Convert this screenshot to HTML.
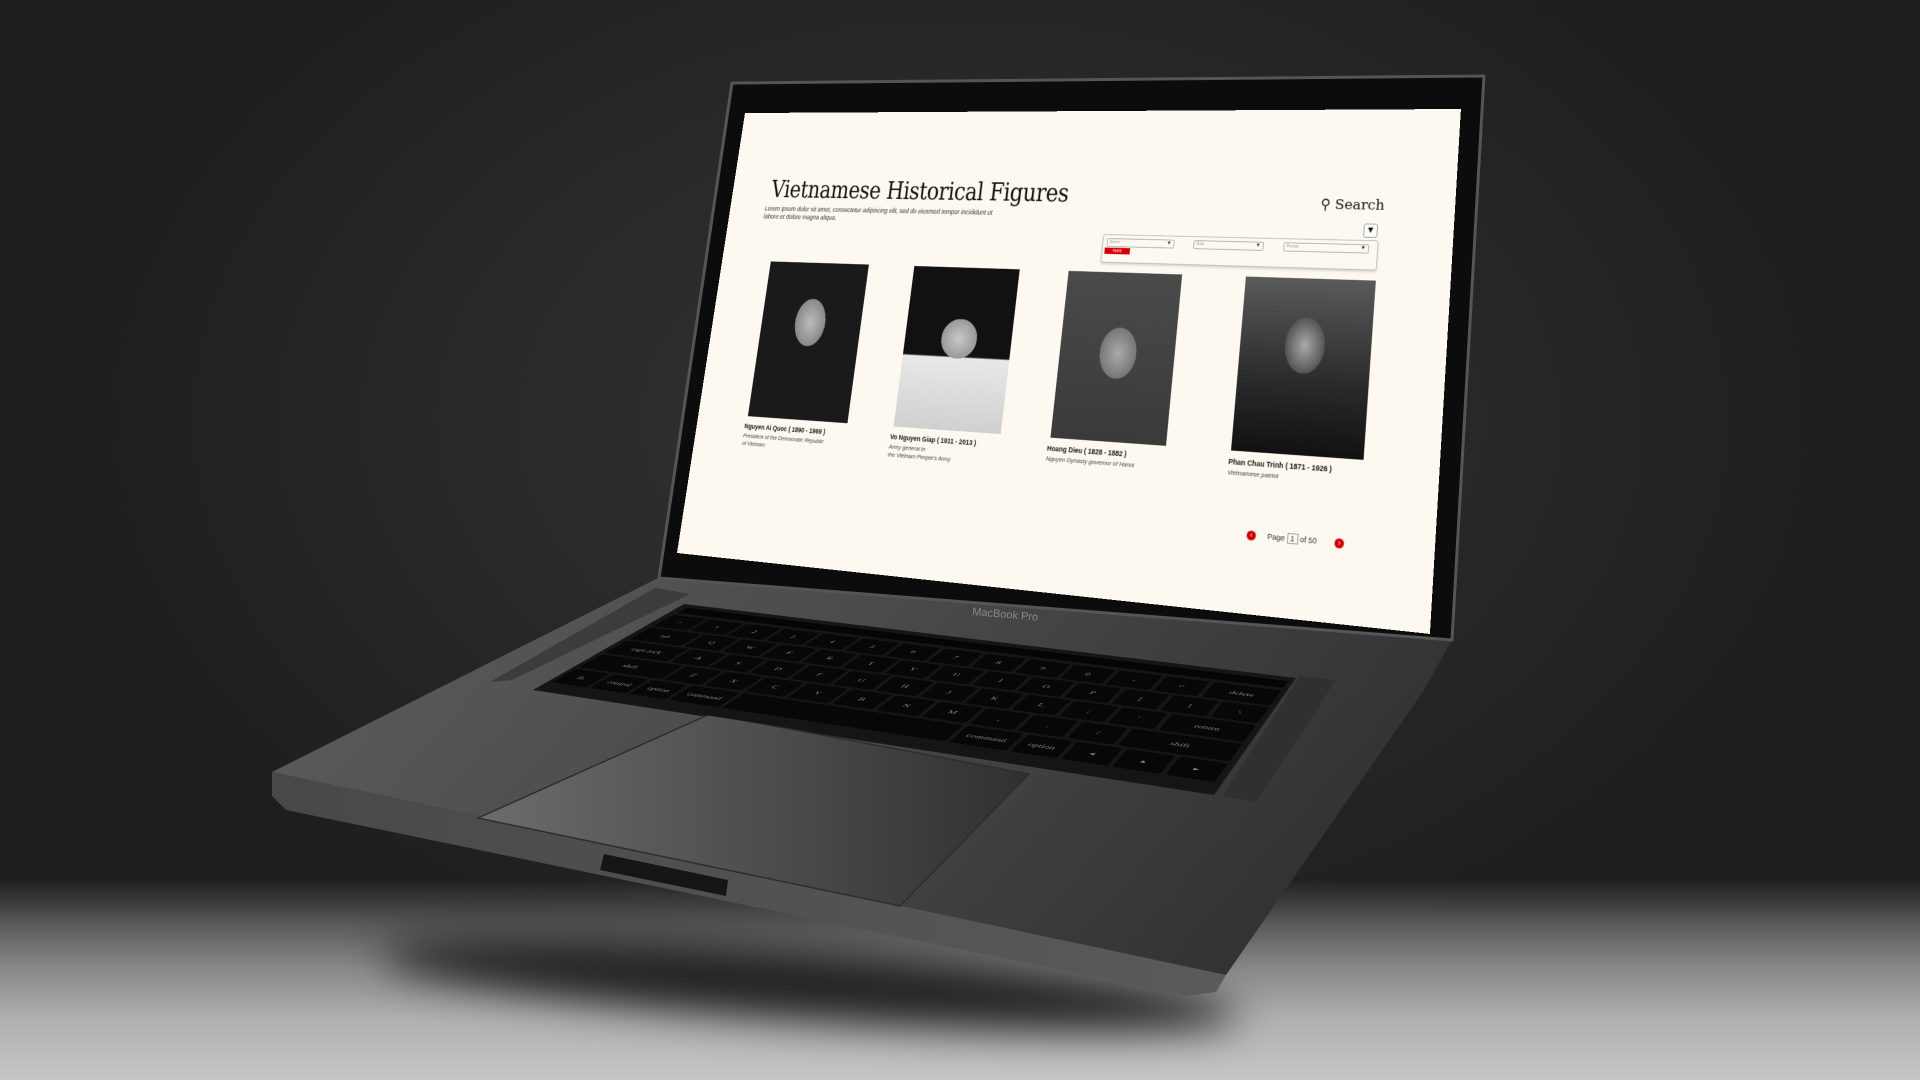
<!DOCTYPE html>
<html><head><meta charset="utf-8"><style>
html,body{margin:0;padding:0;width:1920px;height:1080px;overflow:hidden;background:#222;}
#bg{position:absolute;left:0;top:0;width:1920px;height:1080px;
background:radial-gradient(ellipse 900px 600px at 960px 420px,#353535 0%,#282828 55%,#1e1e1e 100%);}
#floor{position:absolute;left:0;top:880px;width:1920px;height:200px;
background:linear-gradient(to bottom,rgba(60,60,60,0) 0px,#5a5a5a 45px,#8a8a8a 90px,#b0b0b0 140px,#c6c6c6 200px);}
#shadow{position:absolute;left:380px;top:950px;width:860px;height:70px;border-radius:50%;
background:#151515;filter:blur(20px);transform:rotate(4deg);opacity:.9}
svg{position:absolute;left:0;top:0}
.q{position:absolute;left:0;top:0;transform-origin:0 0;}
#screen{width:1000px;height:600px;background:#fdf8f0;font-family:"Liberation Sans",sans-serif;color:#111;overflow:hidden}
#screen .title{position:absolute;left:62px;top:88px;font-family:"DejaVu Serif","Liberation Serif",serif;font-size:33px;letter-spacing:-0.5px;transform:scaleX(0.9);transform-origin:0 0;white-space:nowrap}
#screen .sub{position:absolute;left:56px;top:130px;font-size:8.5px;font-style:italic;color:#333;line-height:11px}
#screen .search{position:absolute;left:838px;top:108px;font-family:"DejaVu Serif",serif;font-size:17px;}
#screen .fico{position:absolute;left:893px;top:140px;width:15px;height:15px;border:1.5px solid #999;border-radius:3px;background:#fff;font-size:11px;text-align:center;line-height:15px;font-weight:bold}
#screen .panel{position:absolute;left:560px;top:160px;width:350px;height:34px;border:1.5px solid #bbb;border-radius:3px;background:#fdf8f0;box-shadow:0 2px 3px rgba(0,0,0,.15)}
.sel{position:absolute;top:4px;height:9px;border:1px solid #aaa;border-radius:2px;font-size:5px;color:#999;padding-left:3px;line-height:9px}
.sel b{position:absolute;right:3px;top:0;color:#111;font-size:6px}
.apply{position:absolute;left:3px;top:16px;width:34px;height:8px;background:#d40000;color:#fff;font-size:5px;line-height:8px;text-align:center}
.ph{position:absolute;top:208px;width:152px;height:208px;}
.cap{position:absolute;top:424px;font-size:8.5px;font-weight:bold;white-space:nowrap}
.desc{position:absolute;top:437px;font-size:7.5px;font-style:italic;color:#444;line-height:10px}
.pg{position:absolute;top:506px;font-size:9px;color:#333}
.dot{position:absolute;top:506px;width:11px;height:11px;border-radius:50%;background:#d40000;color:#fff;font-size:9px;line-height:11px;text-align:center}
#kb{width:640px;height:230px;background:#151515}
#kb .row{display:flex;gap:4px;margin:0 4px 4px 4px}
#kb .k{background:#070707;border-radius:3px;height:34px;flex:1;color:#888;font-size:9px;text-align:center;line-height:34px}
#kb .tb{height:16px;margin:4px 4px 6px;background:#050505;border-radius:3px;position:relative}
</style></head><body>
<div id="bg"></div><div id="floor"></div><div id="shadow"></div>
<svg width="1920" height="1080" viewBox="0 0 1920 1080">
<defs>
<linearGradient id="base" x1="0" y1="0" x2="1" y2="0.3"><stop offset="0" stop-color="#5e5e60"/><stop offset="0.5" stop-color="#4a4a4c"/><stop offset="1" stop-color="#333335"/></linearGradient>
<linearGradient id="tp" x1="0" y1="0" x2="1" y2="0"><stop offset="0" stop-color="#6c6c6e"/><stop offset="1" stop-color="#303032"/></linearGradient>
<linearGradient id="edge" x1="0" y1="0" x2="1" y2="0"><stop offset="0" stop-color="#48484a"/><stop offset="1" stop-color="#5a5a5c"/></linearGradient>
</defs>
<polygon points="272,772 1226,975 1216,992 1186,996 286,810 272,796" fill="url(#edge)"/>
<polygon points="662,576 1452,640 1424,690 1226,975 272,772" fill="url(#base)" stroke-linejoin="round"/>
<polygon points="690,594 512,680 490,682 655,588" fill="#3c3c3e"/>
<polygon points="1300,676 1336,680 1256,802 1222,796" fill="#303032"/>
<polygon points="684,604 1296,678 1214,795 533,690" fill="#161616"/>
<polygon points="710,714 1029,774 900,906 478,818" fill="url(#tp)" stroke="#2e2e30" stroke-width="1.5"/>
<polygon points="604,854 728,880 726,896 600,870" fill="#151515"/>
<polygon points="732,83 1484,76 1452,640 659,578" fill="#0c0c0c" stroke="#555" stroke-width="3" stroke-linejoin="round"/>
<text x="972" y="615" fill="#888" font-family="Liberation Sans" font-size="11" transform="rotate(5 972 615)">MacBook Pro</text>
</svg>
<div id="kb" class="q">
<div class="tb"></div>
<div class="row"><div class="k">~</div><div class="k">1</div><div class="k">2</div><div class="k">3</div><div class="k">4</div><div class="k">5</div><div class="k">6</div><div class="k">7</div><div class="k">8</div><div class="k">9</div><div class="k">0</div><div class="k">-</div><div class="k">=</div><div class="k" style="flex:1.5">delete</div></div>
<div class="row"><div class="k" style="flex:1.5">tab</div><div class="k">Q</div><div class="k">W</div><div class="k">E</div><div class="k">R</div><div class="k">T</div><div class="k">Y</div><div class="k">U</div><div class="k">I</div><div class="k">O</div><div class="k">P</div><div class="k">[</div><div class="k">]</div><div class="k">\</div></div>
<div class="row"><div class="k" style="flex:1.8">caps lock</div><div class="k">A</div><div class="k">S</div><div class="k">D</div><div class="k">F</div><div class="k">G</div><div class="k">H</div><div class="k">J</div><div class="k">K</div><div class="k">L</div><div class="k">;</div><div class="k">'</div><div class="k" style="flex:1.8">return</div></div>
<div class="row"><div class="k" style="flex:2.3">shift</div><div class="k">Z</div><div class="k">X</div><div class="k">C</div><div class="k">V</div><div class="k">B</div><div class="k">N</div><div class="k">M</div><div class="k">,</div><div class="k">.</div><div class="k">/</div><div class="k" style="flex:2.3">shift</div></div>
<div class="row"><div class="k">fn</div><div class="k">control</div><div class="k">option</div><div class="k" style="flex:1.3">command</div><div class="k" style="flex:5.5"></div><div class="k" style="flex:1.3">command</div><div class="k">option</div><div class="k">◂</div><div class="k">▴</div><div class="k">▸</div></div>
</div>
<div id="screen" class="q">
<div class="title">Vietnamese Historical Figures</div>
<div class="sub">Lorem ipsum dolor sit amet, consectetur adipiscing elit, sed do eiusmod tempor incididunt ut<br>labore et dolore magna aliqua.</div>
<div class="search">&#9906; Search</div>
<div class="fico">▼</div>
<div class="panel">
<div class="sel" style="left:5px;width:85px">Event<b>▼</b></div>
<div class="sel" style="left:120px;width:85px">Role<b>▼</b></div>
<div class="sel" style="left:235px;width:100px">Period<b>▼</b></div>
<div class="apply">Apply</div>
</div>
<div class="ph" style="left:78px;background:radial-gradient(ellipse 38px 52px at 75px 80px,#bdbdbd,#888 60%,#1a1a1a 61%),linear-gradient(#8a8a8a,#4a4a4a)"></div>
<div class="ph" style="left:298px;background:radial-gradient(ellipse 42px 42px at 78px 92px,#c8c8c8,#999 60%,transparent 61%),linear-gradient(to bottom,#111 0,#111 55%,#e8e8e8 56%,#d0d0d0 100%)"></div>
<div class="ph" style="left:518px;background:radial-gradient(ellipse 40px 52px at 78px 100px,#aaa,#777 60%,transparent 61%),linear-gradient(#4a4a4a,#3a3a3a)"></div>
<div class="ph" style="left:752px;width:160px;background:radial-gradient(ellipse 40px 55px at 80px 80px,#aaa,#555 60%,transparent 61%),linear-gradient(to bottom,#5a5a5a,#2a2a2a 60%,#111)"></div>
<div class="cap" style="left:75px">Nguyen Ai Quoc ( 1890 - 1969 )</div>
<div class="desc" style="left:75px">President of the Democratic Republic<br>of Vietnam</div>
<div class="cap" style="left:295px">Vo Nguyen Giap ( 1911 - 2013 )</div>
<div class="desc" style="left:295px">Army general in<br>the Vietnam People's Army</div>
<div class="cap" style="left:515px">Hoang Dieu ( 1828 - 1882 )</div>
<div class="desc" style="left:515px">Nguyen Dynasty governor of Hanoi</div>
<div class="cap" style="left:750px">Phan Chau Trinh ( 1871 - 1926 )</div>
<div class="desc" style="left:750px">Vietnamese patriot</div>
<div class="dot" style="left:780px">‹</div>
<div class="pg" style="left:805px">Page <span style="border:1px solid #999;padding:0 3px">1</span> of 50</div>
<div class="dot" style="left:885px">›</div>
</div>
<script>
function solve(A,b){var n=b.length;for(var i=0;i<n;i++){var m=i;for(var r=i+1;r<n;r++)if(Math.abs(A[r][i])>Math.abs(A[m][i]))m=r;var t=A[i];A[i]=A[m];A[m]=t;t=b[i];b[i]=b[m];b[m]=t;for(var r=i+1;r<n;r++){var f=A[r][i]/A[i][i];for(var c=i;c<n;c++)A[r][c]-=f*A[i][c];b[r]-=f*b[i];}}var x=new Array(n);for(var i=n-1;i>=0;i--){var s=b[i];for(var c=i+1;c<n;c++)s-=A[i][c]*x[c];x[i]=s/A[i][i];}return x;}
function warp(el,w,h,q){var src=[[0,0],[w,0],[w,h],[0,h]];var A=[],b=[];for(var i=0;i<4;i++){var x=src[i][0],y=src[i][1],X=q[i][0],Y=q[i][1];A.push([x,y,1,0,0,0,-x*X,-y*X]);b.push(X);A.push([0,0,0,x,y,1,-x*Y,-y*Y]);b.push(Y);}var s=solve(A,b);el.style.transform="matrix3d("+[s[0],s[3],0,s[6],s[1],s[4],0,s[7],0,0,1,0,s[2],s[5],0,1].join(",")+")";}
warp(document.getElementById('screen'),1000,600,[[745,113],[1461,109],[1430,634],[677,553]]);
warp(document.getElementById('kb'),640,230,[[686,606],[1294,680],[1212,793],[535,689]]);
</script>
</body></html>
